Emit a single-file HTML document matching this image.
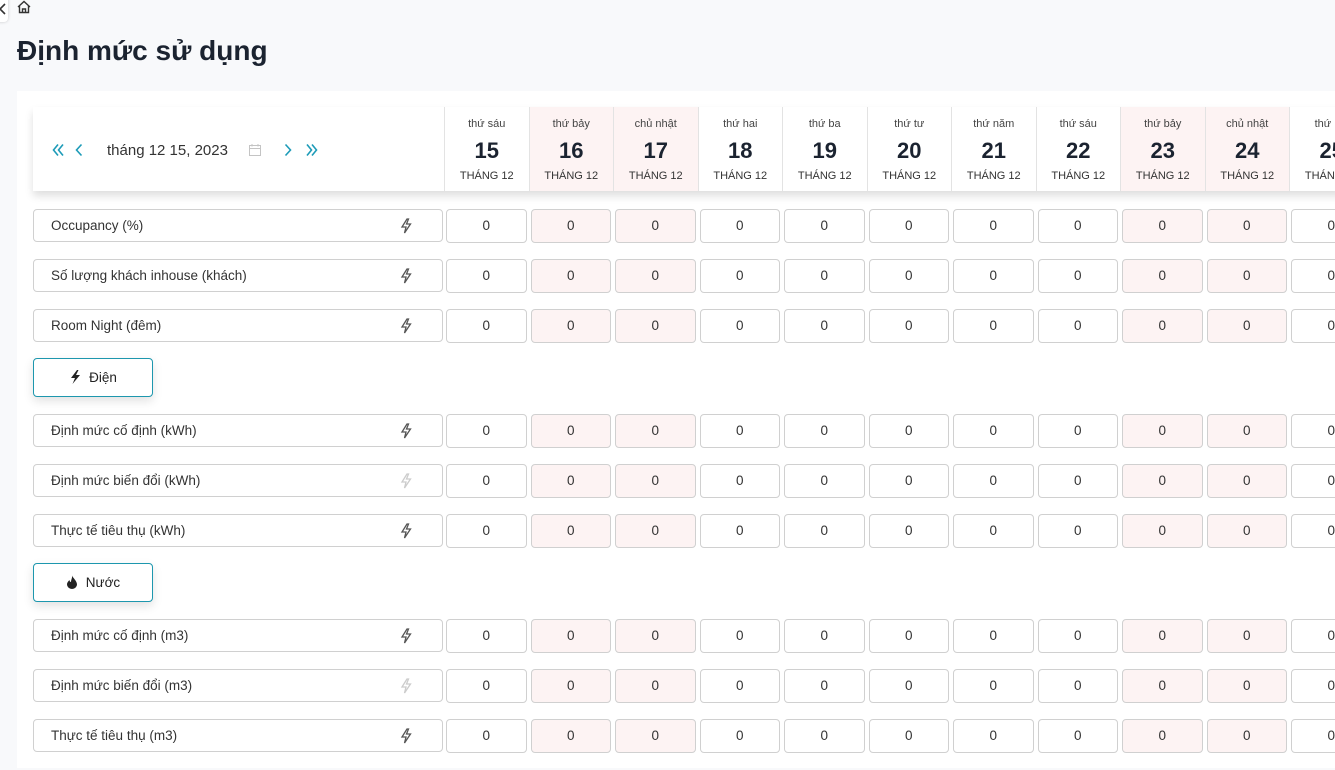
<!DOCTYPE html>
<html><head><meta charset="utf-8">
<style>
*{box-sizing:border-box;margin:0;padding:0}
body{width:1335px;height:770px;overflow:hidden;background:#f8f9fb;font-family:"Segoe UI","Liberation Sans","DejaVu Sans",sans-serif;color:#212529;position:relative}
.abs{position:absolute}
.card{left:17px;top:91px;width:1330px;height:677px;background:#fff}
.hdr{left:33px;top:107px;width:1310px;height:84px;background:#fff;box-shadow:0 5px 8px rgba(0,0,0,.13)}
.day{position:absolute;top:0;height:84px;width:84.5px;border-left:1px solid #e3e3e3;text-align:center}
.day.w{background:#fdf3f3}
.day .a{font-size:11px;color:#444;margin-top:10px;height:14px;line-height:14px}
.day .b{font-size:22px;font-weight:bold;color:#1b2330;line-height:34px;margin-top:3px}
.day .c{font-size:11px;color:#333;line-height:14px;margin-top:1px}
.lbl{left:33px;width:410px;height:33px;border:1px solid #d0d0d0;border-radius:4px;background:#fff;font-size:13.5px;color:#333;line-height:32px;padding-left:17px}
.lbl svg{position:absolute;right:29px;top:8px}
.cells{left:445px;width:940px;height:33px;display:grid;grid-template-columns:repeat(11,81.5px);column-gap:3px}
.cells div{border:1px solid #d0d0d0;border-radius:4px;background:#fff;text-align:center;line-height:32px;font-size:13.5px;color:#333;margin-left:1px}
.cells div.w{background:#fdf3f3}
.btn{left:33px;width:120px;height:39px;border:1px solid #1d97ae;border-radius:4px;background:#fff;box-shadow:0 4px 10px rgba(0,0,0,.12);font-size:13.5px;color:#222;line-height:37px;text-align:center}
</style></head><body>
<div class="abs" style="left:-12px;top:-6px;width:20px;height:28px;background:#fff;border-radius:4px;box-shadow:0 0 3px rgba(0,0,0,.2)"></div>
<svg class="abs" style="left:0;top:2px" width="6" height="14"><path d="M5 2 L0 7 L5 12" stroke="#333" stroke-width="1.6" fill="none"/></svg>
<svg class="abs" style="left:16px;top:0" width="16" height="14" viewBox="0 0 16 14"><path d="M2 7 L8 1.5 L14 7 M3.5 5.8 V12.5 H12.5 V5.8 M6.5 12.5 V9 H9.5 V12.5" stroke="#333" stroke-width="1.4" fill="none"/></svg>
<div class="abs" style="left:17px;top:30px;font-size:28px;font-weight:600;color:#1b2330;line-height:42px">Định mức sử dụng</div>
<div class="abs card"></div>
<div class="abs hdr">
<svg class="abs" style="left:19px;top:36px" width="14" height="14" viewBox="0 0 14 14"><path d="M6 1.5 L1.5 7 L6 12.5 M11 1.5 L6.5 7 L11 12.5" stroke="#1d9bb8" stroke-width="1.6" fill="none"/></svg>
<svg class="abs" style="left:41px;top:36px" width="10" height="14" viewBox="0 0 10 14"><path d="M7.5 1.5 L2.5 7 L7.5 12.5" stroke="#1d9bb8" stroke-width="1.6" fill="none"/></svg>
<div class="abs" style="left:74px;top:34px;font-size:15px;color:#333;line-height:20px">tháng 12 15, 2023</div>
<svg class="abs" style="left:215px;top:36px" width="14" height="14" viewBox="0 0 14 14"><rect x="1.5" y="2.5" width="11" height="10" stroke="#c4c4c4" fill="none"/><path d="M1.5 5.5 H12.5 M4 1 V3.5 M10 1 V3.5" stroke="#c4c4c4"/></svg>
<svg class="abs" style="left:250px;top:36px" width="10" height="14" viewBox="0 0 10 14"><path d="M2.5 1.5 L7.5 7 L2.5 12.5" stroke="#1d9bb8" stroke-width="1.6" fill="none"/></svg>
<svg class="abs" style="left:271px;top:36px" width="14" height="14" viewBox="0 0 14 14"><path d="M3 1.5 L7.5 7 L3 12.5 M8 1.5 L12.5 7 L8 12.5" stroke="#1d9bb8" stroke-width="1.6" fill="none"/></svg>
<div class="day" style="left:411px"><div class="a">thứ sáu</div><div class="b">15</div><div class="c">THÁNG 12</div></div>
<div class="day w" style="left:495.5px"><div class="a">thứ bảy</div><div class="b">16</div><div class="c">THÁNG 12</div></div>
<div class="day w" style="left:580px"><div class="a">chủ nhật</div><div class="b">17</div><div class="c">THÁNG 12</div></div>
<div class="day" style="left:664.5px"><div class="a">thứ hai</div><div class="b">18</div><div class="c">THÁNG 12</div></div>
<div class="day" style="left:749px"><div class="a">thứ ba</div><div class="b">19</div><div class="c">THÁNG 12</div></div>
<div class="day" style="left:833.5px"><div class="a">thứ tư</div><div class="b">20</div><div class="c">THÁNG 12</div></div>
<div class="day" style="left:918px"><div class="a">thứ năm</div><div class="b">21</div><div class="c">THÁNG 12</div></div>
<div class="day" style="left:1002.5px"><div class="a">thứ sáu</div><div class="b">22</div><div class="c">THÁNG 12</div></div>
<div class="day w" style="left:1087px"><div class="a">thứ bảy</div><div class="b">23</div><div class="c">THÁNG 12</div></div>
<div class="day w" style="left:1171.5px"><div class="a">chủ nhật</div><div class="b">24</div><div class="c">THÁNG 12</div></div>
<div class="day" style="left:1256px"><div class="a">thứ hai</div><div class="b">25</div><div class="c">THÁNG 12</div></div>
</div>

<div class="abs lbl" style="top:209px">Occupancy (%)<svg width="14" height="16" viewBox="0 0 14 16"><path d="M8 1 L3 9 H7 L5.5 15 L11.5 6 H7.5 L9.5 1 Z" stroke="#555" stroke-width="1.3" fill="none"/></svg></div>
<div class="abs cells" style="top:209px"><div>0</div><div class="w">0</div><div class="w">0</div><div>0</div><div>0</div><div>0</div><div>0</div><div>0</div><div class="w">0</div><div class="w">0</div><div>0</div></div>
<div class="abs lbl" style="top:259px">Số lượng khách inhouse (khách)<svg width="14" height="16" viewBox="0 0 14 16"><path d="M8 1 L3 9 H7 L5.5 15 L11.5 6 H7.5 L9.5 1 Z" stroke="#555" stroke-width="1.3" fill="none"/></svg></div>
<div class="abs cells" style="top:259px"><div>0</div><div class="w">0</div><div class="w">0</div><div>0</div><div>0</div><div>0</div><div>0</div><div>0</div><div class="w">0</div><div class="w">0</div><div>0</div></div>
<div class="abs lbl" style="top:309px">Room Night (đêm)<svg width="14" height="16" viewBox="0 0 14 16"><path d="M8 1 L3 9 H7 L5.5 15 L11.5 6 H7.5 L9.5 1 Z" stroke="#555" stroke-width="1.3" fill="none"/></svg></div>
<div class="abs cells" style="top:309px"><div>0</div><div class="w">0</div><div class="w">0</div><div>0</div><div>0</div><div>0</div><div>0</div><div>0</div><div class="w">0</div><div class="w">0</div><div>0</div></div>

<div class="abs btn" style="top:358px"><svg width="12" height="14" viewBox="0 0 12 14" style="vertical-align:-2px;margin-right:8px"><path d="M8 0 L2 8 H6 L3.5 14 L11 5 H7 L9.5 0 Z" fill="#222"/></svg>Điện</div>

<div class="abs lbl" style="top:414px">Định mức cố định (kWh)<svg width="14" height="16" viewBox="0 0 14 16"><path d="M8 1 L3 9 H7 L5.5 15 L11.5 6 H7.5 L9.5 1 Z" stroke="#555" stroke-width="1.3" fill="none"/></svg></div>
<div class="abs cells" style="top:414px"><div>0</div><div class="w">0</div><div class="w">0</div><div>0</div><div>0</div><div>0</div><div>0</div><div>0</div><div class="w">0</div><div class="w">0</div><div>0</div></div>
<div class="abs lbl" style="top:464px">Định mức biến đổi (kWh)<svg width="14" height="16" viewBox="0 0 14 16"><path d="M8 1 L3 9 H7 L5.5 15 L11.5 6 H7.5 L9.5 1 Z" stroke="#ccc" stroke-width="1.3" fill="none"/></svg></div>
<div class="abs cells" style="top:464px"><div>0</div><div class="w">0</div><div class="w">0</div><div>0</div><div>0</div><div>0</div><div>0</div><div>0</div><div class="w">0</div><div class="w">0</div><div>0</div></div>
<div class="abs lbl" style="top:514px">Thực tế tiêu thụ (kWh)<svg width="14" height="16" viewBox="0 0 14 16"><path d="M8 1 L3 9 H7 L5.5 15 L11.5 6 H7.5 L9.5 1 Z" stroke="#555" stroke-width="1.3" fill="none"/></svg></div>
<div class="abs cells" style="top:514px"><div>0</div><div class="w">0</div><div class="w">0</div><div>0</div><div>0</div><div>0</div><div>0</div><div>0</div><div class="w">0</div><div class="w">0</div><div>0</div></div>

<div class="abs btn" style="top:563px"><svg width="12" height="14" viewBox="0 0 12 14" style="vertical-align:-2px;margin-right:8px"><path d="M6 0.5 C7 3 11 6 11 9.5 A5 4.5 0 0 1 1 9.5 C1 7.5 2.5 6 3.5 5 C3.5 6.5 4.5 7 5 7 C5 4.5 6.5 3 6 0.5 Z" fill="#222"/></svg>Nước</div>

<div class="abs lbl" style="top:619px">Định mức cố định (m3)<svg width="14" height="16" viewBox="0 0 14 16"><path d="M8 1 L3 9 H7 L5.5 15 L11.5 6 H7.5 L9.5 1 Z" stroke="#555" stroke-width="1.3" fill="none"/></svg></div>
<div class="abs cells" style="top:619px"><div>0</div><div class="w">0</div><div class="w">0</div><div>0</div><div>0</div><div>0</div><div>0</div><div>0</div><div class="w">0</div><div class="w">0</div><div>0</div></div>
<div class="abs lbl" style="top:669px">Định mức biến đổi (m3)<svg width="14" height="16" viewBox="0 0 14 16"><path d="M8 1 L3 9 H7 L5.5 15 L11.5 6 H7.5 L9.5 1 Z" stroke="#ccc" stroke-width="1.3" fill="none"/></svg></div>
<div class="abs cells" style="top:669px"><div>0</div><div class="w">0</div><div class="w">0</div><div>0</div><div>0</div><div>0</div><div>0</div><div>0</div><div class="w">0</div><div class="w">0</div><div>0</div></div>
<div class="abs lbl" style="top:719px">Thực tế tiêu thụ (m3)<svg width="14" height="16" viewBox="0 0 14 16"><path d="M8 1 L3 9 H7 L5.5 15 L11.5 6 H7.5 L9.5 1 Z" stroke="#555" stroke-width="1.3" fill="none"/></svg></div>
<div class="abs cells" style="top:719px"><div>0</div><div class="w">0</div><div class="w">0</div><div>0</div><div>0</div><div>0</div><div>0</div><div>0</div><div class="w">0</div><div class="w">0</div><div>0</div></div>
</body></html>
